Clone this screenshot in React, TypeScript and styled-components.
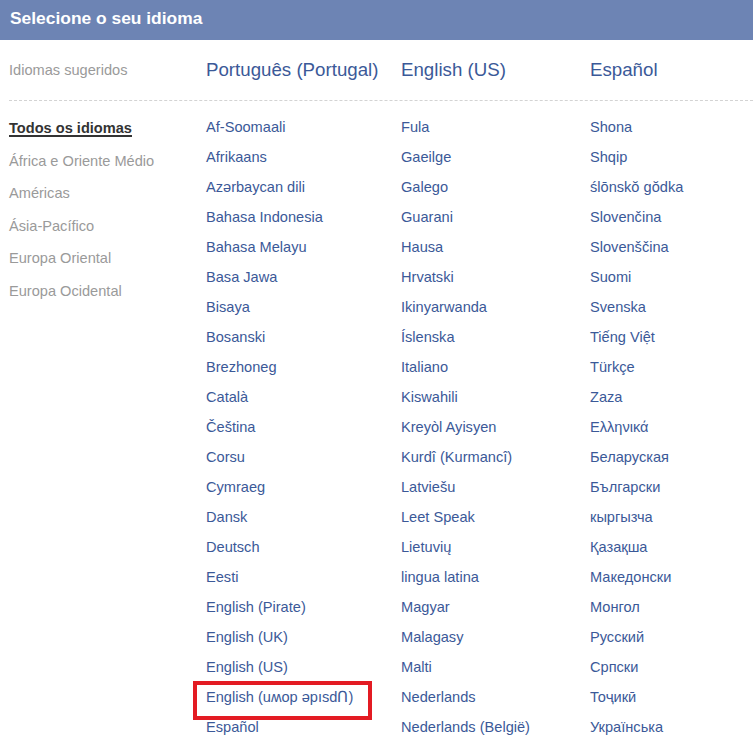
import React from "react";
import styled, { createGlobalStyle } from "styled-components";

const Global = createGlobalStyle`
  html, body { margin: 0; padding: 0; background: #fff; }
  body { font-family: "Liberation Sans", Arial, sans-serif; }
`;

const Header = styled.div`
  background: #6d84b4;
  height: 40px;
  box-sizing: border-box;
  padding: 8px 10px 0 10px;
  color: #fff;
  font-weight: bold;
  font-size: 17.4px;
  line-height: 20px;
`;

const Content = styled.div`
  padding-left: 9px;
`;

const Grid = styled.div`
  display: grid;
  grid-template-columns: 197px 195px 189px 1fr;
`;

const SuggestedRow = styled(Grid)`
  height: 61px;
  align-items: center;
  border-bottom: 1px dashed #d3d3d3;
  padding-bottom: 1px;
  box-sizing: border-box;
`;

const Muted = styled.div`
  color: #9a9a9a;
  font-size: 14.6px;
`;

const BigLink = styled.a`
  color: #3b5998;
  font-size: 18.7px;
  text-decoration: none;
  white-space: nowrap;
`;

const Body = styled(Grid)`
  padding-top: 11px;
`;

const Nav = styled.ul`
  list-style: none;
  margin: 0;
  padding: 0;
`;

const NavItem = styled.li<{ $active?: boolean }>`
  font-size: 14.6px;
  line-height: 32.5px;
  color: ${(p) => (p.$active ? "#333" : "#9a9a9a")};
  font-weight: ${(p) => (p.$active ? "bold" : "normal")};
  span {
    text-decoration: ${(p) => (p.$active ? "underline" : "none")};
    text-decoration-thickness: 2px;
    text-underline-offset: 2px;
  }
`;

const List = styled.ul`
  list-style: none;
  margin: 0;
  padding: 0;
`;

const Item = styled.li`
  position: relative;
  font-size: 14.6px;
  line-height: 30px;
  white-space: nowrap;
`;

const Link = styled.a`
  color: #3b5998;
  text-decoration: none;
`;

const Marker = styled.span`
  position: absolute;
  left: -13px;
  top: -1px;
  width: 179px;
  height: 39px;
  box-sizing: border-box;
  border: 4px solid #e31b23;
  pointer-events: none;
`;

const col1 = [
  "Af-Soomaali", "Afrikaans", "Azərbaycan dili", "Bahasa Indonesia", "Bahasa Melayu",
  "Basa Jawa", "Bisaya", "Bosanski", "Brezhoneg", "Català", "Čeština", "Corsu",
  "Cymraeg", "Dansk", "Deutsch", "Eesti", "English (Pirate)", "English (UK)",
  "English (US)", "English (uʍop ǝpısdՈ)", "Español",
];
const col2 = [
  "Fula", "Gaeilge", "Galego", "Guarani", "Hausa", "Hrvatski", "Ikinyarwanda",
  "Íslenska", "Italiano", "Kiswahili", "Kreyòl Ayisyen", "Kurdî (Kurmancî)",
  "Latviešu", "Leet Speak", "Lietuvių", "lingua latina", "Magyar", "Malagasy",
  "Malti", "Nederlands", "Nederlands (België)",
];
const col3 = [
  "Shona", "Shqip", "ślōnskŏ gŏdka", "Slovenčina", "Slovenščina", "Suomi", "Svenska",
  "Tiếng Việt", "Türkçe", "Zaza", "Ελληνικά", "Беларуская", "Български", "кыргызча",
  "Қазақша", "Македонски", "Монгол", "Русский", "Српски", "Тоҷикӣ", "Українська",
];

const nav = [
  "Todos os idiomas", "África e Oriente Médio", "Américas", "Ásia-Pacífico",
  "Europa Oriental", "Europa Ocidental",
];

const highlighted = "English (uʍop ǝpısdՈ)";

function LangList({ items }: { items: string[] }) {
  return (
    <List>
      {items.map((l) => (
        <Item key={l}>
          {l === highlighted && <Marker />}
          <Link href="#">{l}</Link>
        </Item>
      ))}
    </List>
  );
}

export default function App() {
  return (
    <>
      <Global />
      <Header>Selecione o seu idioma</Header>
      <Content>
        <SuggestedRow>
          <Muted>Idiomas sugeridos</Muted>
          <BigLink href="#">Português (Portugal)</BigLink>
          <BigLink href="#">English (US)</BigLink>
          <BigLink href="#">Español</BigLink>
        </SuggestedRow>
        <Body>
          <Nav>
            {nav.map((n, i) => (
              <NavItem key={n} $active={i === 0}>
                <span>{n}</span>
              </NavItem>
            ))}
          </Nav>
          <LangList items={col1} />
          <LangList items={col2} />
          <LangList items={col3} />
        </Body>
      </Content>
    </>
  );
}
